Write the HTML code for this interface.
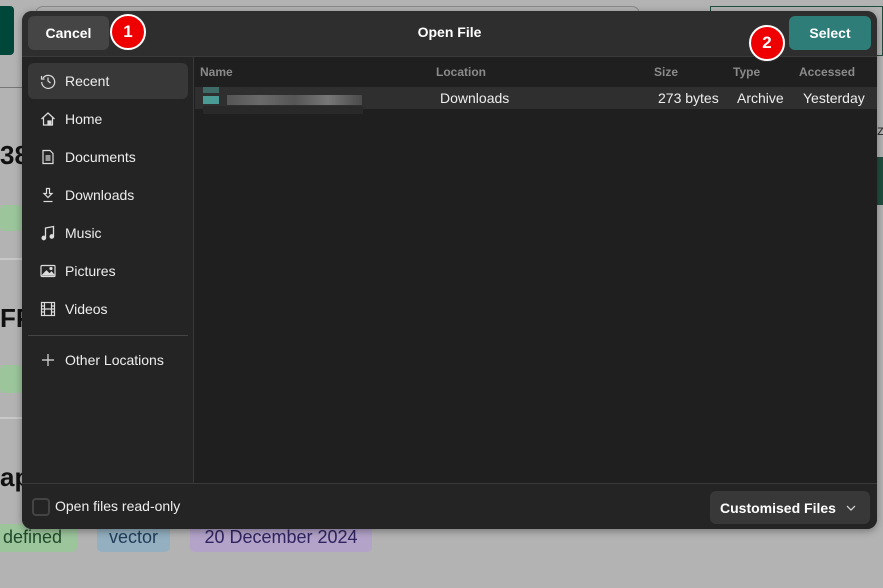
<!DOCTYPE html>
<html><head><meta charset="utf-8"><style>
*{box-sizing:border-box;margin:0;padding:0}
body{width:883px;height:588px;overflow:hidden;background:#b3b3b3;font-family:"Liberation Sans",sans-serif;position:relative}
.abs{position:absolute}
.dlg{left:22px;top:11px;width:855px;height:518px;background:#1f1f1f;border-radius:10px;overflow:hidden;box-shadow:0 2px 8px rgba(0,0,0,.35)}
.hdr{left:0;top:0;width:855px;height:46px;background:#2e2e2e;border-bottom:1px solid #3a3a3a}
.btn{border-radius:6px;color:#fff;font-weight:bold;font-size:14px;display:flex;align-items:center;justify-content:center}
.side{left:0;top:46px;width:172px;height:426px;background:#242424;border-right:1px solid #3a3a3a}
.item{position:absolute;left:6px;width:160px;height:36px;border-radius:6px;color:#eee;font-size:14px;display:flex;align-items:center;padding-left:37px}
.ic{position:absolute;left:12px;top:10px;width:16px;height:16px}
.foot{left:0;top:472px;width:855px;height:46px;background:#242424;border-top:1px solid #3a3a3a}
.col{position:absolute;top:54px;color:#8a8a8a;font-size:12px;font-weight:bold}
.badge{width:36px;height:36px;border-radius:50%;background:#e00;border:2px solid #fff;box-shadow:0 0 0 1px #333;color:#fff;font-weight:bold;font-size:17px;display:flex;align-items:center;justify-content:center}
</style></head><body>
<!-- background page -->
<div class="abs" style="left:0;top:6px;width:14px;height:49px;background:#00473a;border-radius:0 4px 4px 0"></div>
<div class="abs" style="left:35px;top:6px;width:605px;height:30px;border:1px solid #888;border-radius:8px"></div>
<div class="abs" style="left:710px;top:6px;width:173px;height:50px;border:1px solid #1e4d3e"></div>
<div class="abs" style="left:0;top:87px;width:22px;height:1px;background:#777"></div>
<div class="abs" style="left:0;top:140px;font-size:26px;font-weight:bold;color:#111">38</div>
<div class="abs" style="left:0;top:205px;width:22px;height:26px;background:#9cc59c;border-radius:4px"></div>
<div class="abs" style="left:0;top:258px;width:22px;height:2px;background:#c8c8c8"></div>
<div class="abs" style="left:0;top:303px;font-size:26px;font-weight:bold;color:#111">FP</div>
<div class="abs" style="left:0;top:365px;width:22px;height:28px;background:#9cc59c;border-radius:4px"></div>
<div class="abs" style="left:0;top:417px;width:22px;height:2px;background:#c8c8c8"></div>
<div class="abs" style="left:0;top:462px;font-size:26px;font-weight:bold;color:#111">ap</div>
<div class="abs" style="left:0;top:524px;width:77px;height:28px;background:#9cc59c;border-radius:0 5px 5px 0;color:#1f4a2a;font-size:18px;padding:3px 3px">defined</div>
<div class="abs" style="left:97px;top:524px;width:73px;height:28px;background:#93afc0;border-radius:5px;color:#1f3b56;font-size:18px;text-align:center;padding-top:3px">vector</div>
<div class="abs" style="left:190px;top:524px;width:182px;height:28px;background:#b3a3c9;border-radius:5px;color:#2f2460;font-size:18px;text-align:center;padding-top:3px">20 December 2024</div>
<div class="abs" style="left:877px;top:157px;width:6px;height:48px;background:#1e4d3e"></div>
<div class="abs" style="left:877px;top:122px;font-size:14px;color:#333">zi</div>

<div class="abs dlg">
 <div class="abs hdr"></div>
 <div class="abs btn" style="left:6px;top:5px;width:81px;height:34px;background:#454545">Cancel</div>
 <div class="abs" style="left:0;top:13px;width:855px;text-align:center;color:#fff;font-weight:bold;font-size:14px">Open File</div>
 <div class="abs btn" style="left:767px;top:5px;width:82px;height:34px;background:#2e7d78">Select</div>

 <div class="abs side">
  <div class="item" style="top:6px;background:#383838"><svg class="ic" viewBox="0 0 16 16" fill="none" stroke="#ddd" stroke-width="1.2"><path d="M3 5A6.5 6.5 0 1 1 1.7 9"/><path d="M1.5 3v3h3"/><path d="M8 4.5V8l2.5 2"/></svg>Recent</div>
  <div class="item" style="top:44px"><svg class="ic" viewBox="0 0 16 16" fill="none" stroke="#ddd" stroke-width="1.2"><path d="M1.5 8L8 2l6.5 6M3.5 6.5V14h9V6.5"/><rect x="8" y="10" width="3" height="4" fill="#ddd"/></svg>Home</div>
  <div class="item" style="top:82px"><svg class="ic" viewBox="0 0 16 16" fill="none" stroke="#ddd" stroke-width="1.2"><path d="M3 1.5h7l3 3v10H3z"/><path d="M5.5 7h5M5.5 9h5M5.5 11h5"/></svg>Documents</div>
  <div class="item" style="top:120px"><svg class="ic" viewBox="0 0 16 16" fill="none" stroke="#ddd" stroke-width="1.2"><path d="M6.5 1.5h3v5h2.5L8 10.5 4 6.5h2.5z"/><path d="M3.5 14.5h9"/></svg>Downloads</div>
  <div class="item" style="top:158px"><svg class="ic" viewBox="0 0 16 16" fill="none" stroke="#ddd" stroke-width="1.3"><path d="M5.5 13V3l8-1.5V11.5"/><circle cx="3.8" cy="13" r="1.7" fill="#ddd"/><circle cx="11.8" cy="11.5" r="1.7" fill="#ddd"/></svg>Music</div>
  <div class="item" style="top:196px"><svg class="ic" viewBox="0 0 16 16" fill="none" stroke="#ddd" stroke-width="1.2"><rect x="1" y="2.5" width="14" height="11" rx="1"/><path d="M2.5 12l4-4 3 3 2-2 2.5 3z" fill="#ddd"/><circle cx="11" cy="5.5" r="1" fill="#ddd"/></svg>Pictures</div>
  <div class="item" style="top:234px"><svg class="ic" viewBox="0 0 16 16" fill="none" stroke="#ddd" stroke-width="1.2"><rect x="1.5" y="1.5" width="13" height="13"/><path d="M4.5 1.5v13M11.5 1.5v13M1.5 5h3M1.5 8h3M1.5 11h3M11.5 5h3M11.5 8h3M11.5 11h3M4.5 8h7"/></svg>Videos</div>
  <div class="abs" style="left:6px;top:278px;width:160px;height:1px;background:#444"></div>
  <div class="item" style="top:285px"><svg class="ic" viewBox="0 0 16 16" fill="none" stroke="#ddd" stroke-width="1.2"><path d="M8 2v12M2 8h12"/></svg>Other Locations</div>
 </div>

 <div class="abs" style="left:173px;top:46px;width:682px;height:30px;background:#1f1f1f"></div>
 <div class="col" style="left:178px">Name</div>
 <div class="col" style="left:414px">Location</div>
 <div class="col" style="left:632px">Size</div>
 <div class="col" style="left:711px">Type</div>
 <div class="col" style="left:777px">Accessed</div>
 <div class="abs" style="left:173px;top:76px;width:682px;height:22px;background:#2f2f2f"></div>
 <div class="abs" style="left:181px;top:76px;width:16px;height:6px;background:#3e6a67"></div>
 <div class="abs" style="left:181px;top:85px;width:16px;height:8px;background:#4a9a96"></div>
 <div class="abs" style="left:205px;top:84px;width:135px;height:10px;background:linear-gradient(90deg,#555,#6a6a6a,#555,#777,#4a4a4a)"></div>
 <div class="abs" style="left:181px;top:95px;width:160px;height:8px;background:#292929"></div>
 <div class="abs" style="left:418px;top:79px;color:#eee;font-size:14px">Downloads</div>
 <div class="abs" style="left:636px;top:79px;color:#eee;font-size:14px">273 bytes</div>
 <div class="abs" style="left:715px;top:79px;color:#eee;font-size:14px">Archive</div>
 <div class="abs" style="left:781px;top:79px;color:#eee;font-size:14px">Yesterday</div>

 <div class="abs foot"></div>
 <div class="abs" style="left:10px;top:487px;width:18px;height:18px;border:2px solid #444;border-radius:4px"></div>
 <div class="abs" style="left:33px;top:487px;color:#eee;font-size:14px">Open files read-only</div>
 <div class="abs btn" style="left:688px;top:480px;width:160px;height:33px;background:#383838;justify-content:flex-start;padding-left:10px">Customised Files<svg style="margin-left:10px" width="10" height="6" viewBox="0 0 10 6" fill="none" stroke="#ddd" stroke-width="1.2"><path d="M1 1l4 4 4-4"/></svg></div>
</div>

<div class="abs badge" style="left:110px;top:14px">1</div>
<div class="abs badge" style="left:749px;top:25px">2</div>
</body></html>
